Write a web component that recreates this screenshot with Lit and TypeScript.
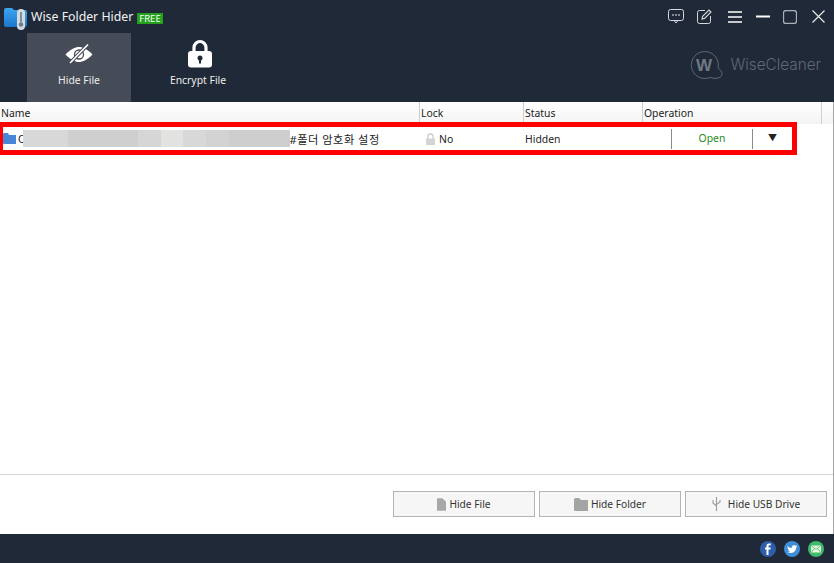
import { LitElement, html, css } from "lit";
import { customElement } from "lit/decorators.js";

@customElement("app-root")
export class AppRoot extends LitElement {
  static styles = css`
    :host { display: block; width: 834px; height: 563px; position: relative; overflow: hidden; background: #fff;
      font-family: "Noto Sans", "Noto Sans CJK KR", sans-serif; font-size: 10.4px; color: #222; }
    .page { display: flex; flex-direction: column; height: 563px; }
    .top { background: #1f2937; height: 102px; flex: none; display: flex; flex-direction: column; color: #fff; }
    .titlebar { height: 33px; display: flex; align-items: center; padding: 0 9px 0 3px; flex: none; box-sizing: border-box; }
    .logo { width: 26px; height: 24px; margin-right: 2px; margin-top: 2px; }
    .title { font-size: 12.3px; color: #f2f2f2; }
    .free { background: #22a01e; color: #fff; font-size: 9.5px; line-height: 11px; padding: 0 2px; margin: 3px 0 0 4px; }
    .winbtns { margin-left: auto; display: flex; align-items: center; gap: 13px; }
    .winbtns svg { display: block; }
    .w-menu { margin-left: 3px; }
    .w-min { margin-left: 1px; }
    .w-close { margin-left: 2px; }
    .tools { display: flex; flex: 1; padding-left: 27px; align-items: stretch; position: relative; }
    .tool { width: 104px; display: flex; flex-direction: column; align-items: center; font-size: 10.4px; color: #eee; padding-top: 6px; }
    .tool.on { background: #464c57; }
    .tool svg { height: 30px; margin-bottom: 4px; display: block; }
    .tool.enc { width: 134px; }
    .tool.enc svg { margin-left: 4px; }
    .brand { margin-left: auto; display: flex; align-items: center; gap: 5px; padding: 0 13px 3px 0; color: #5f6874; font-size: 15.3px; font-family: "Inter", "Liberation Sans", sans-serif; font-weight: 300; height: 66px; box-sizing: border-box; }
    .cols { display: grid; grid-template-columns: 420px 104px 119px 179px 1fr; height: 22px; background: linear-gradient(#fff, #f4f4f4); flex: none; font-size: 10.4px; }
    .cols div { border-right: 1px solid #cfcfcf; padding: 3px 0 0 1px; line-height: 17px; }
    .cols .last { border: 0; }
    .row { display: grid; grid-template-columns: 420px 104px 119px 109px 80px; height: 29px; align-items: center; font-size: 10.4px; flex: none; }
    .name { display: flex; align-items: center; padding-left: 3px; white-space: nowrap; }
    .c { margin-left: 2px; flex: none; }
    .blur { display: flex; height: 17px; width: 267px; flex: none; margin-left: -2px; }
    .blur i { display: block; height: 100%; }
    .ko { font-size: 11.2px; letter-spacing: 0.5px; }
    .lock { display: flex; align-items: center; gap: 3px; padding-left: 5px; }
    .status { padding-left: 1px; }
    .open { color: #1f8a1f; text-align: center; border-left: 1px solid #8a8a8a; height: 20px; line-height: 19px; margin-left: 28px; }
    .arrow { border-left: 1px solid #8a8a8a; height: 20px; line-height: 18px; padding-left: 15px; font-size: 9px; }
    .list { flex: 1; }
    .bottom { height: 60px; box-sizing: border-box; flex: none; border-top: 1px solid #d6d6d6; display: flex; justify-content: flex-end; gap: 4px; padding: 16px 7px 0 0; }
    .btn { width: 142px; height: 26px; box-sizing: border-box; border: 1px solid #b4b4b4; background: #f6f6f6; display: flex; align-items: center; justify-content: center; gap: 3px; font-size: 10.2px; color: #333; }
    .usb { margin-right: 4px; }
    .foot { height: 29px; flex: none; background: #1f2937; display: flex; justify-content: flex-end; align-items: center; gap: 8px; padding: 0 10px 0 0; }
    .foot svg { display: block; }
    .redbox { position: absolute; left: 0; top: 122px; width: 797px; height: 33px; box-sizing: border-box; border: solid #f00; border-width: 5px 5px 5px 3px; pointer-events: none; }
    .edge { position: absolute; right: 0; top: 102px; width: 1px; height: 432px; background: #a8a8a8; }
  `;
  render() {
    const blurs: [number, string][] = [[45,"#d8d8d8"],[70,"#cfcfcf"],[23,"#d6d6d6"],[22,"#e2e2e0"],[23,"#d8d8d8"],[23,"#d3d3d3"],[61,"#cecece"]];
    return html`<div class="page">
      <div class="top">
        <div class="titlebar">
          <svg class="logo" viewBox="0 0 26 24"><defs><linearGradient id="lg" x1="0" y1="0" x2="0" y2="1"><stop offset="0" stop-color="#3fa4ee"/><stop offset="1" stop-color="#1a78cc"/></linearGradient></defs><path d="M1 4Q1 2 3 2H9l2 2H22q2 0 2 2V19Q24 21 22 21H3Q1 21 1 19Z" fill="url(#lg)"/><rect x="14" y="3" width="8" height="21" rx="4" fill="#d3dbe0"/><rect x="17.200" y="6" width="1.600" height="10" fill="#6f7a84"/><circle cx="18" cy="18.500" r="2.200" fill="#6f7a84"/></svg>
          <span class="title">Wise Folder Hider</span><span class="free">FREE</span>
          <div class="winbtns">
            <svg width="16" height="15" viewBox="0 0 16 15" fill="none" stroke="#d5d8dc"><rect x="0.500" y="0.500" width="15" height="11" rx="2"/><path d="M6 11.500l2 2.500 2-2.500"/><path d="M4 6h2M7 6h2M10 6h2" stroke="#eee"/></svg>
            <svg width="15" height="15" viewBox="0 0 15 15" fill="none" stroke="#d5d8dc"><path d="M8 1.500H2.500a2 2 0 0 0-2 2v9a2 2 0 0 0 2 2h9a2 2 0 0 0 2-2V7"/><path d="M5 10l.6-2.600L12 1l2 2-6.400 6.400Z" stroke-width="1.100"/></svg>
            <svg class="w-menu" width="14" height="12" viewBox="0 0 14 12" stroke="#fff" stroke-width="1.400"><path d="M0 1h14M0 6h14M0 11h14"/></svg>
            <svg class="w-min" width="14" height="3" viewBox="0 0 14 3"><rect width="14" height="2" y="0.500" fill="#fff"/></svg>
            <svg class="w-max" width="14" height="14" viewBox="0 0 14 14" fill="none" stroke="#aab0b8"><rect x="0.500" y="0.500" width="13" height="13" rx="2.500" stroke-width="1.300"/></svg>
            <svg class="w-close" width="13" height="13" viewBox="0 0 13 13" stroke="#f0f0f0" stroke-width="1.100"><path d="M0.500 0.500l12 12M12.500 0.500l-12 12"/></svg>
          </div>
        </div>
        <div class="tools">
          <div class="tool on">
            <svg width="28" height="30" viewBox="0 0 28 30"><path d="M0.500 15.500C6 10 10 8 14 8C18 8 22 10 27.500 15.500C22 21 18 23 14 23C10 23 6 21 0.500 15.500Z" fill="#fff"/><circle cx="14" cy="15.500" r="4.500" fill="none" stroke="#464c57" stroke-width="1.300"/><path d="M5 24L23 5.500" stroke="#464c57" stroke-width="3.600"/><path d="M5 24L23 5.500" stroke="#fff" stroke-width="1.700"/></svg>
            <span>Hide File</span>
          </div>
          <div class="tool enc">
            <svg width="24" height="30" viewBox="0 0 24 30"><path d="M6 14V8.500a6 6 0 0 1 12 0V14" fill="none" stroke="#fff" stroke-width="3.200"/><rect x="0" y="12" width="24" height="16.500" rx="3" fill="#fff"/><circle cx="12" cy="19" r="2.500" fill="#1f2937"/><rect x="11" y="20" width="2" height="4.500" fill="#1f2937"/></svg>
            <span>Encrypt File</span>
          </div>
          <div class="brand">
            <svg width="35" height="30" viewBox="0 0 35 30" fill="none"><path d="M28 18A13.500 13.500 0 1 0 20 27.500Q25 29.500 30 27.500Q35 23 28 18Z" stroke="#5f6874" stroke-width="1"/><text x="6" y="21" font-family="Liberation Sans" font-size="17" font-weight="700" fill="#707884">W</text></svg>
            <span>WiseCleaner</span>
          </div>
        </div>
      </div>
      <div class="cols"><div>Name</div><div>Lock</div><div>Status</div><div>Operation</div><div class="last"></div></div>
      <div class="row">
        <div class="name">
          <svg width="13" height="11" viewBox="0 0 13 11"><path d="M0 1q0-1 1-1h4l1 2h7v9H1q-1 0-1-1Z" fill="#4a86d8"/></svg>
          <span class="c">C</span>
          <div class="blur">${blurs.map(([w, c]) => html`<i style="width:${w}px;background:${c}"></i>`)}</div>
          <span class="ko">#폴더 암호화 설정</span>
        </div>
        <div class="lock">
          <svg width="11" height="12" viewBox="0 0 11 12"><path d="M3 6V3.500a2.500 2.500 0 0 1 5 0V6" fill="none" stroke="#ccc" stroke-width="1.300"/><rect x="1" y="5.500" width="9" height="6.500" fill="#d4d4d4"/></svg>
          <span>No</span>
        </div>
        <div class="status">Hidden</div>
        <div class="open">Open</div>
        <div class="arrow">▼</div>
      </div>
      <div class="list"></div>
      <div class="bottom">
        <div class="btn"><svg width="9" height="13" viewBox="0 0 10 14"><path d="M0 0H6L10 4V14H0Z" fill="#a8a8a8"/></svg>Hide File</div>
        <div class="btn"><svg width="14" height="13" viewBox="0 0 14 13"><path d="M0 1.500Q0 0 1.500 0H5L7 2H14V13H1.500Q0 13 0 11.500Z" fill="#a4a4a4"/></svg>Hide Folder</div>
        <div class="btn"><svg class="usb" width="9" height="14" viewBox="0 0 9 14" fill="none" stroke="#a0a0a0"><path d="M4.500 0V14M1 3V6L4.500 9M8 3V5L4.500 7.500" stroke-width="1.200"/></svg>Hide USB Drive</div>
      </div>
      <div class="foot">
        <svg width="16" height="16" viewBox="0 0 16 16"><circle cx="8" cy="8" r="8" fill="#2f5ea8"/><path d="M8.500 14V8.500H10.500L10.800 6.500H8.500V5.200Q8.500 4.300 9.500 4.300H10.800V2.500H9Q6.500 2.500 6.500 5V6.500H5V8.500H6.500V14Z" fill="#fff"/></svg>
        <svg width="16" height="16" viewBox="0 0 16 16"><circle cx="8" cy="8" r="8" fill="#3f8fd8"/><path d="M3 5Q5 7 7.800 7Q7.700 4.300 10 4.200Q11 4.200 11.500 4.800L13 4.300L12.200 5.600L13.200 5.400Q12.700 6.200 12 6.600Q12 11.500 7 12Q5 12 3.500 11Q5 11 6 10.200Q4.500 10 4 8.800H5Q3.500 8 3.500 6.800L4.500 7Q3 6 3 5Z" fill="#fff"/></svg>
        <svg width="16" height="16" viewBox="0 0 16 16"><circle cx="8" cy="8" r="8" fill="#3dbb6c"/><rect x="3" y="4.500" width="10" height="7" fill="#e8f5e0"/><path d="M3 4.500L8 8.500L13 4.500M3 11.500L6.500 7.500M13 11.500L9.500 7.500" fill="none" stroke="#3dbb6c" stroke-width="0.800"/></svg>
      </div>
    </div>
    <div class="redbox"></div>
    <div class="edge"></div>`;
  }
}
